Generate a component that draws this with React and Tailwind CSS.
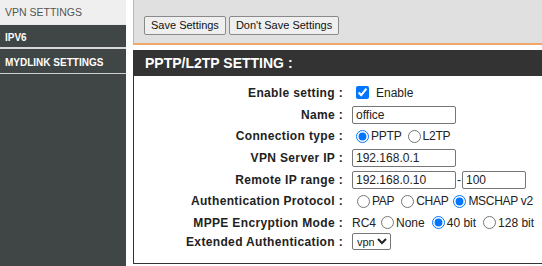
export default function App() {
  const font = { fontFamily: '"Liberation Sans", Arial, sans-serif' };
  const Label = ({ children, cls = "" }) => (
    <div className={"flex h-[21.7px] items-center justify-end pr-[7px] text-[12px] font-bold tracking-[0.35px] text-[#222] " + cls}>{children}</div>
  );
  const Val = ({ children, cls = "" }) => (
    <div className={"flex h-[21.7px] items-center whitespace-nowrap text-[12px] text-[#222] " + cls}>{children}</div>
  );
  const Radio = ({ checked, name }) => (
    <input type="radio" name={name} defaultChecked={checked} className="m-0 ml-[5px] mr-[2px] h-[13px] w-[13px] shrink-0" />
  );
  const inputCls = "h-[18px] rounded-[2px] border border-[#767676] px-[3px] text-[12px] text-[#222]";
  return (
    <div className="flex h-[266px] w-[542px] overflow-hidden bg-white" style={font}>
      <div className="flex w-[126px] shrink-0 flex-col bg-[#404545]">
        <div className="flex h-[25px] items-center border-b border-[#e8e8e8] bg-[#efefef] pl-[5px] pt-[2px] text-[10.5px] text-[#555]">VPN SETTINGS</div>
        <div className="flex h-[24px] items-center border-b-2 border-[#d8d8d8] pl-[5px] pt-[2px] text-[10px] font-bold text-white">IPV6</div>
        <div className="flex h-[25px] items-center border-b border-[#cfcfcf] pl-[5px] pt-[2px] text-[10px] font-bold text-white">MYDLINK SETTINGS</div>
      </div>
      <div className="ml-[7px] flex w-[440px] shrink-0 flex-col">
        <div className="flex h-[45px] items-end border-b-2 border-l border-[#f0a868] bg-[#e0e0e0] pb-[8px] pl-[10px]">
          <div className="flex gap-[3px]">
            <button className="h-[19px] rounded-[2px] border border-[#8a8a8a] bg-[#efefef] px-[6px] text-[11px] text-[#111]">Save Settings</button>
            <button className="h-[19px] rounded-[2px] border border-[#8a8a8a] bg-[#efefef] px-[6px] text-[11px] text-[#111]">Don't Save Settings</button>
          </div>
        </div>
        <div className="mt-[5px] flex h-[26px] items-center bg-[#333333] pl-[12px] text-[14px] font-bold text-white">PPTP/L2TP SETTING :</div>
        <div className="grid h-[188px] grid-cols-[216px_224px] content-start border-b border-l border-[#333] pt-[6px]">
          <Label>Enable setting :</Label>
          <Val>
            <input type="checkbox" defaultChecked className="m-0 ml-[6px] h-[13px] w-[13px] shrink-0" />
            <span className="ml-[7px]">Enable</span>
          </Val>
          <Label>Name :</Label>
          <Val>
            <input defaultValue="office" className={"ml-[2px] w-[104px] " + inputCls} />
          </Val>
          <Label>Connection type :</Label>
          <Val>
            <span className="ml-[1px]" />
            <Radio name="ct" checked />
            <span className="tracking-[-0.2px]">PPTP</span>
            <span className="w-[1px]" />
            <Radio name="ct" />
            <span className="tracking-[-0.2px]">L2TP</span>
          </Val>
          <Label>VPN Server IP :</Label>
          <Val>
            <input defaultValue="192.168.0.1" className={"ml-[2px] w-[104px] " + inputCls} />
          </Val>
          <Label>Remote IP range :</Label>
          <Val>
            <input defaultValue="192.168.0.10" className={"ml-[2px] w-[104px] " + inputCls} />
            <span className="mx-[1px]">-</span>
            <input defaultValue="100" className={"w-[64px] " + inputCls} />
          </Val>
          <Label>Authentication Protocol :</Label>
          <Val>
            <span className="ml-[2px]" />
            <Radio name="ap" />
            <span className="tracking-[-0.3px]">PAP</span>
            <span className="w-[2px]" />
            <Radio name="ap" />
            <span className="tracking-[-0.3px]">CHAP</span>
            <Radio name="ap" checked />
            <span className="tracking-[-0.3px]">MSCHAP v2</span>
          </Val>
          <Label>MPPE Encryption Mode :</Label>
          <Val>
            <span className="ml-[2px]">RC4</span>
            <Radio name="mp" />
            <span>None</span>
            <span className="w-[2px]" />
            <Radio name="mp" checked />
            <span>40 bit</span>
            <span className="w-[2px]" />
            <Radio name="mp" />
            <span>128 bit</span>
          </Val>
          <Label cls="-mt-[3px]">Extended Authentication :</Label>
          <Val cls="-mt-[3px]">
            <select defaultValue="vpn" className="ml-[2px] h-[17px] w-[39px] rounded-[2px] border border-[#767676] text-[11px]">
              <option value="vpn">vpn</option>
            </select>
          </Val>
        </div>
      </div>
    </div>
  );
}
